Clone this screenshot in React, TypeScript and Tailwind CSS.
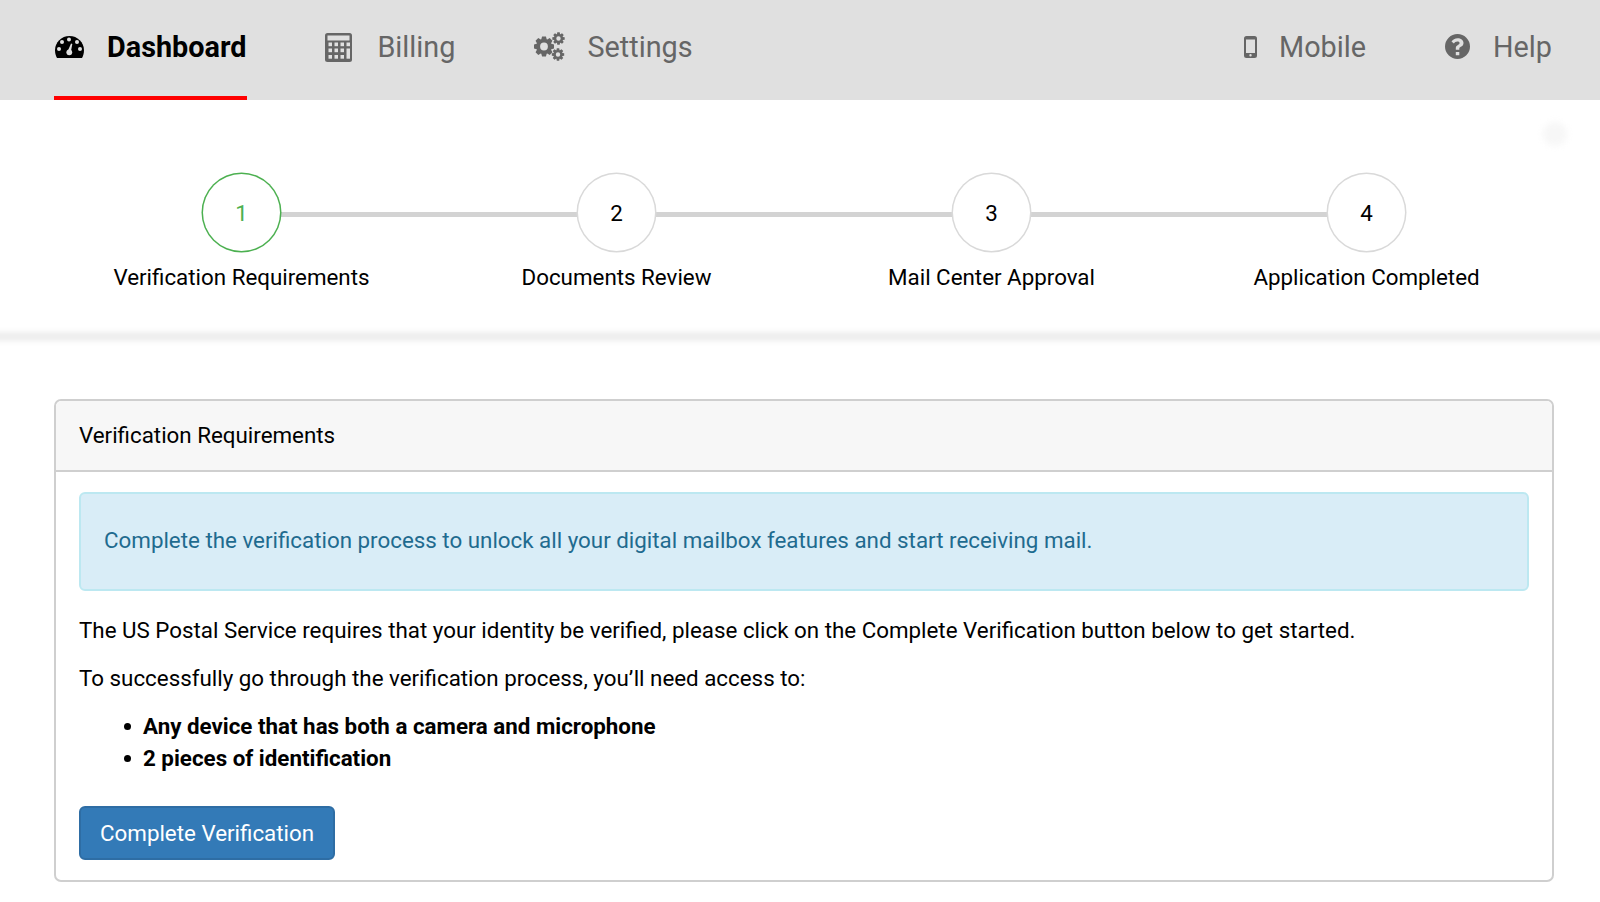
function Gauge() {
  return (
    <svg width="29" height="22" viewBox="0 0 29 22" className="shrink-0 ml-[1px] mb-[1px]">
      <path fill="#000" d="M14.500 0C6.500 0 0 6.300 0 14.200c0 2.800.7 5.400 2 7.800h25c1.300-2.400 2-5 2-7.800C29 6.300 22.500 0 14.500 0Z" />
      <g fill="#e0e0e0">
        <circle cx="14" cy="3.600" r="2" />
        <circle cx="7" cy="6" r="2" />
        <circle cx="22" cy="6" r="2" />
        <circle cx="4" cy="13" r="2" />
        <circle cx="25" cy="13" r="2" />
        <circle cx="14.300" cy="16.300" r="2.900" />
        <path d="M16 7.500l1.300.4-1.400 7.500-3-.6Z" />
      </g>
    </svg>
  );
}

function Calc() {
  const cols = [3.500, 9.500, 15.500, 21.500];
  const rows = [9.500, 15.500, 22];
  return (
    <svg width="27" height="29" viewBox="0 0 27 29" className="shrink-0">
      <rect x="0" y="0" width="27" height="29" rx="2.500" fill="#666" />
      <rect x="2.500" y="2.500" width="22" height="5" fill="#e0e0e0" />
      <g fill="#e0e0e0">
        {rows.map((y) =>
          cols.map((x, i) =>
            i === 3 && y > 10 ? null : <rect key={x + "-" + y} x={x} y={y} width="3.500" height="3.700" />,
          ),
        )}
        <rect x="21.500" y="15.500" width="3.500" height="10.200" />
      </g>
    </svg>
  );
}

function gearPath(cx: number, cy: number, ro: number, ri: number, teeth: number, hole: number) {
  const pts: string[] = [];
  const step = (Math.PI * 2) / teeth;
  for (let i = 0; i < teeth; i++) {
    const a = i * step - Math.PI / 2;
    const offs: [number, number][] = [
      [-0.5, ri],
      [-0.27, ro],
      [0.27, ro],
      [0.5, ri],
    ];
    for (const [o, r] of offs) {
      const t = a + o * step * 0.9;
      pts.push(`${(cx + r * Math.cos(t)).toFixed(2)} ${(cy + r * Math.sin(t)).toFixed(2)}`);
    }
  }
  const ring = `M${cx - hole} ${cy}a${hole} ${hole} 0 1 0 ${hole * 2} 0a${hole} ${hole} 0 1 0 ${-hole * 2} 0Z`;
  return `M${pts.join("L")}Z${ring}`;
}

function Gears() {
  return (
    <svg width="31" height="29" viewBox="0 0 31 29" className="shrink-0 mb-[1px]">
      <path fill="#666" fillRule="evenodd" d={gearPath(10, 14.500, 10.200, 7.800, 8, 3.900)} />
      <path fill="#666" fillRule="evenodd" d={gearPath(24.500, 6.500, 6.300, 4.600, 8, 2.200)} />
      <path fill="#666" fillRule="evenodd" d={gearPath(24, 22.500, 6.300, 4.600, 8, 2.200)} />
    </svg>
  );
}

function Phone() {
  return (
    <svg width="13" height="22" viewBox="0 0 13 22" className="shrink-0 mb-[1px]">
      <path
        fill="#666"
        fillRule="evenodd"
        d="M2.500 0h8A2.500 2.500 0 0 1 13 2.500v17a2.500 2.500 0 0 1-2.500 2.500h-8A2.500 2.500 0 0 1 0 19.500v-17A2.500 2.500 0 0 1 2.500 0ZM2 3.500v13.500h9V3.500ZM6.500 18a1.200 1.200 0 1 0 0 2.400a1.200 1.200 0 0 0 0-2.400Z"
      />
    </svg>
  );
}

function Help() {
  return (
    <svg width="25" height="25" viewBox="0 0 25 25" className="shrink-0 mb-[2px]">
      <path
        fill="#666"
        fillRule="evenodd"
        d="M12.500 0a12.500 12.500 0 1 1 0 25a12.500 12.500 0 0 1 0-25ZM10.800 18v3.300h3.500V18ZM12.700 4.200c-2.900 0-4.900 1.300-6.200 3.400l2.400 1.800c.8-1.100 1.700-1.900 3.500-1.900 1.400 0 2.200.7 2.200 1.600 0 .9-.6 1.400-1.700 2-1.500.8-2.100 1.700-2.100 3.300v1.300h3.500v-1c0-.9.500-1.300 1.500-1.900 1.500-.8 2.700-1.900 2.700-3.900 0-2.900-2.700-4.700-5.800-4.700Z"
      />
    </svg>
  );
}

const steps = [
  ["1", "Verification Requirements"],
  ["2", "Documents Review"],
  ["3", "Mail Center Approval"],
  ["4", "Application Completed"],
];

const bullet =
  "relative before:content-[''] before:absolute before:left-[-19px] before:top-[13px] before:w-[7px] before:h-[7px] before:rounded-full before:bg-black";

export default function App() {
  return (
    <div className="min-h-[902px] bg-white text-black font-['Roboto',sans-serif] overflow-hidden text-[22.350px] leading-[32px]">
      <nav className="h-[100px] bg-[#e0e0e0] pl-[54px] pr-[46px] flex text-[28.800px] text-[#666]">
        <a className="h-full flex items-center gap-[23px] border-b-4 border-[#ff0000] pb-[2px] pr-[1px] text-black font-bold">
          <Gauge />
          <span>Dashboard</span>
        </a>
        <a className="h-full flex items-center gap-[25px] border-b-4 border-transparent pb-[2px] ml-[78px]">
          <Calc />
          <span>Billing</span>
        </a>
        <a className="h-full flex items-center gap-[22px] border-b-4 border-transparent pb-[2px] ml-[79px]">
          <Gears />
          <span>Settings</span>
        </a>
        <a className="h-full flex items-center gap-[22px] border-b-4 border-transparent pb-[2px] ml-auto">
          <Phone />
          <span>Mobile</span>
        </a>
        <a className="h-full flex items-center gap-[23px] border-b-4 border-transparent pb-[2px] ml-[79px] mr-[2px]">
          <Help />
          <span>Help</span>
        </a>
      </nav>

      <section className="relative h-[233px] pl-[54px] pr-[46px] pt-[72px]">
        <div className="absolute right-[33px] top-[22px] w-[24px] h-[24px] rounded-full bg-[#f7f7f7] blur-[3px]" />
        <div className="grid grid-cols-4">
          {steps.map(([n, label], i) => (
            <div key={n} className="relative flex flex-col items-center">
              {i < 3 && <div className="absolute left-1/2 w-full top-[40px] h-[5px] bg-[#d3d3d3]" />}
              <div
                className={
                  "relative z-10 m-[2px] w-[77px] h-[77px] rounded-full bg-white flex items-center justify-center " +
                  (i === 0 ? "shadow-[0_0_0_1.5px_#4cb050] text-[#4cb050]" : "shadow-[0_0_0_1.5px_#d9d9d9] text-black")
                }
              >
                {n}
              </div>
              <div className="mt-[8px]">{label}</div>
            </div>
          ))}
        </div>
      </section>

      <div className="h-[7px] bg-[#e8e8e8] blur-[3px] -mx-[10px]" />

      <main className="pl-[54px] pr-[46px] pt-[59px]">
        <div className="border-2 border-[#cfcfcf] rounded-[7px] h-[483px]">
          <div className="h-[71px] bg-[#f7f7f7] border-b-2 border-[#cfcfcf] rounded-t-[6px] px-[23px] pb-[2px] flex items-center">
            Verification Requirements
          </div>
          <div className="px-[23px] pt-[20px]">
            <div className="h-[99px] bg-[#d9edf7] border-2 border-[#bce8f1] rounded-[6px] text-[#1f6b8f] px-[23px] pb-[3px] flex items-center">
              Complete the verification process to unlock all your digital mailbox features and start receiving mail.
            </div>
            <p className="mt-[23px]">
              The US Postal Service requires that your identity be verified, please click on the Complete Verification button below to get started.
            </p>
            <p className="mt-[16px]">To successfully go through the verification process, you’ll need access to:</p>
            <ul className="mt-[16px] pl-[64px] font-bold">
              <li className={bullet}>Any device that has both a camera and microphone</li>
              <li className={bullet}>2 pieces of identification</li>
            </ul>
            <button className="mt-[32px] h-[54px] px-[19px] bg-[#337ab7] border-2 border-[#2e6da4] rounded-[6px] text-white">
              Complete Verification
            </button>
          </div>
        </div>
      </main>
    </div>
  );
}
